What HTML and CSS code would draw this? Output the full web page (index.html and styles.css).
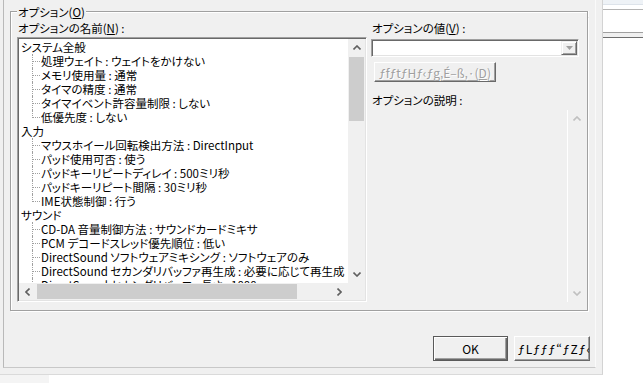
FILE: index.html
```html
<!DOCTYPE html>
<html lang="ja">
<head>
  <meta charset="UTF-8">
  <title>オプション</title>
  <link rel="stylesheet" href="styles.css">
</head>
<body>
<div class="screen">
  <div class="main">
    <div class="dialog">
      <div class="page">
        <div class="group">
          <div class="group-head">
            <span class="head-l"></span>
            <span class="group-title">オプション(<u>O</u>)</span>
            <span class="head-r"></span>
          </div>
          <div class="group-body">
            <div class="col-left">
              <div class="label">オプションの名前(<u>N</u>) :</div>
              <div class="listbox">
                <div class="list-view">
                  <ul class="tree">
                    <li>
                      <div class="root-label">システム全般</div>
                      <ul class="children">
                        <li class="leaf"><span class="branch"></span><span class="leaf-text">処理ウェイト : ウェイトをかけない</span></li>
                        <li class="leaf"><span class="branch"></span><span class="leaf-text">メモリ使用量 : 通常</span></li>
                        <li class="leaf"><span class="branch"></span><span class="leaf-text">タイマの精度 : 通常</span></li>
                        <li class="leaf"><span class="branch"></span><span class="leaf-text">タイマイベント許容量制限 : しない</span></li>
                        <li class="leaf last"><span class="branch"></span><span class="leaf-text">低優先度 : しない</span></li>
                      </ul>
                    </li>
                    <li>
                      <div class="root-label">入力</div>
                      <ul class="children">
                        <li class="leaf"><span class="branch"></span><span class="leaf-text">マウスホイール回転検出方法 : DirectInput</span></li>
                        <li class="leaf"><span class="branch"></span><span class="leaf-text">パッド使用可否 : 使う</span></li>
                        <li class="leaf"><span class="branch"></span><span class="leaf-text">パッドキーリピートディレイ : 500ミリ秒</span></li>
                        <li class="leaf"><span class="branch"></span><span class="leaf-text">パッドキーリピート間隔 : 30ミリ秒</span></li>
                        <li class="leaf last"><span class="branch"></span><span class="leaf-text">IME状態制御 : 行う</span></li>
                      </ul>
                    </li>
                    <li>
                      <div class="root-label">サウンド</div>
                      <ul class="children">
                        <li class="leaf"><span class="branch"></span><span class="leaf-text">CD-DA 音量制御方法 : サウンドカードミキサ</span></li>
                        <li class="leaf"><span class="branch"></span><span class="leaf-text">PCM デコードスレッド優先順位 : 低い</span></li>
                        <li class="leaf"><span class="branch"></span><span class="leaf-text">DirectSound ソフトウェアミキシング : ソフトウェアのみ</span></li>
                        <li class="leaf"><span class="branch"></span><span class="leaf-text">DirectSound セカンダリバッファ再生成 : 必要に応じて再生成</span></li>
                        <li class="leaf"><span class="branch"></span><span class="leaf-text">DirectSound セカンダリバッファ長さ : 1000</span></li>
                      </ul>
                    </li>
                  </ul>
                </div>
                <div class="vscroll">
                  <div class="sb-btn"><svg width="8" height="5" viewBox="0 0 8 5"><path d="M0.5 4.5 L4 1 L7.5 4.5" fill="none" stroke="#606060" stroke-width="1.6"/></svg></div>
                  <div class="vtrack"><div class="vthumb"></div></div>
                  <div class="sb-btn"><svg width="8" height="5" viewBox="0 0 8 5"><path d="M0.5 0.5 L4 4 L7.5 0.5" fill="none" stroke="#606060" stroke-width="1.6"/></svg></div>
                </div>
                <div class="hscroll">
                  <div class="sb-btn"><svg width="5" height="8" viewBox="0 0 5 8"><path d="M4.5 0.5 L1 4 L4.5 7.5" fill="none" stroke="#606060" stroke-width="1.6"/></svg></div>
                  <div class="htrack"><div class="hthumb"></div></div>
                  <div class="sb-btn"><svg width="5" height="8" viewBox="0 0 5 8"><path d="M0.5 0.5 L4 4 L0.5 7.5" fill="none" stroke="#606060" stroke-width="1.6"/></svg></div>
                </div>
                <div class="corner"></div>
              </div>
            </div>

            <div class="col-right">
              <div class="label">オプションの値(<u>V</u>) :</div>
              <div class="combo">
                <div class="combo-btn"><svg width="7" height="4" viewBox="0 0 7 4"><path d="M0 0 H7 L3.5 4 Z" fill="#a0a0a0"/></svg></div>
              </div>
              <button class="btn btn-push btn-disabled" disabled>ƒfƒtƒHƒ‹ƒg‚É–ß‚·(<u>D</u>)</button>
              <div class="label label-desc">オプションの説明 :</div>
              <div class="desc">
                <div class="desc-scroll">
                  <div class="sb-btn"><svg width="8" height="5" viewBox="0 0 8 5"><path d="M0.5 4.5 L4 1 L7.5 4.5" fill="none" stroke="#c0c0c0" stroke-width="1.6"/></svg></div>
                  <div class="sb-btn"><svg width="8" height="5" viewBox="0 0 8 5"><path d="M0.5 0.5 L4 4 L7.5 0.5" fill="none" stroke="#c0c0c0" stroke-width="1.6"/></svg></div>
                </div>
              </div>
            </div>
          </div>
        </div>

        <div class="actions">
          <button class="btn btn-default">OK</button>
          <button class="btn btn-push btn-cancel">ƒLƒƒƒ“ƒZƒ‹</button>
        </div>
      </div>
    </div>
    <div class="taskstrip"><div class="patch"></div></div>
  </div>

  <div class="side">
    <div class="side-band"></div>
    <div class="side-line-a"></div>
    <div class="side-gap-a"></div>
    <div class="side-line-b"></div>
    <div class="side-gap-b"></div>
    <div class="side-line-c"></div>
    <div class="side-bar"></div>
    <div class="side-line-d"></div>
  </div>
</div>
</body>
</html>
```

FILE: styles.css
```css
* {
  box-sizing: border-box;
}
body {
  margin: 0;
  width: 643px;
  height: 383px;
  overflow: hidden;
  background: #fff;
  font-family: "Noto Sans CJK JP", sans-serif;
  font-size: 11.5px;
  font-feature-settings: "palt";
  color: #000;
}
u {
  text-underline-offset: 1px;
}
.screen {
  display: flex;
  height: 383px;
}
.main {
  width: 603px;
  display: flex;
  flex-direction: column;
}

/* dialog frame */
.dialog {
  height: 375px;
  background: #f0f0f0;
  border-right: 1px solid #d3d3d3;
  border-bottom: 1px solid #dadada;
  padding: 0 6px 6px 3px;
}
.page {
  height: 368px;
  border-left: 1px solid #b9b9b9;
  border-right: 1px solid #fafafa;
  border-bottom: 1px solid #c8c8c8;
  display: flex;
  flex-direction: column;
}

/* group box */
.group {
  margin: 5px 7px 0 6px;
  display: flex;
  flex-direction: column;
}
.group-head {
  display: flex;
  height: 12px;
}
.head-l {
  width: 7px;
  height: 6px;
  align-self: flex-end;
  border-top: 1px solid #a0a0a0;
  border-left: 1px solid #a0a0a0;
  box-shadow: inset 1px 1px 0 #fff;
}
.group-title {
  padding: 1px 1px 0;
  line-height: 12px;
  white-space: nowrap;
}
.head-r {
  flex: 1;
  height: 6px;
  align-self: flex-end;
  border-top: 1px solid #a0a0a0;
  border-right: 1px solid #a0a0a0;
  box-shadow: inset 0 1px 0 #fff, 1px 0 0 #fff;
}
.group-body {
  display: flex;
  gap: 4px;
  border: 1px solid #a0a0a0;
  border-top: 0;
  box-shadow: inset 1px 0 0 #fff, 1px 1px 0 #fff;
  padding: 4px 3px 8px 6px;
}
.label {
  height: 14px;
  line-height: 14px;
  padding-left: 1px;
  white-space: nowrap;
}

/* left: tree list */
.col-left {
  width: 350px;
}
.col-left .label {
  margin-bottom: 2px;
}
.listbox {
  width: 350px;
  height: 265px;
  background: #fff;
  border: 1px solid;
  border-color: #a0a0a0 #fff #fff #a0a0a0;
  padding: 1px;
  box-shadow: inset 1px 1px 0 #696969, inset -1px -1px 0 #e3e3e3;
  display: grid;
  grid-template-columns: 1fr 17px;
  grid-template-rows: 1fr 17px;
}
.list-view {
  overflow: hidden;
  padding-top: 1px;
}
.tree {
  list-style: none;
  margin: 0;
  padding: 0 0 0 2px;
}
.tree li {
  line-height: 14px;
  white-space: nowrap;
}
.root-label {
  height: 14px;
}
.children {
  list-style: none;
  margin: 0 0 0 11px;
  padding: 0;
}
.leaf {
  display: flex;
  height: 14px;
  border-left: 1px dotted #a0a0a0;
}
.branch {
  flex: none;
  width: 7px;
  height: 8px;
  border-bottom: 1px dotted #a0a0a0;
}
.leaf.last {
  border-left: 0;
}
.leaf.last .branch {
  width: 8px;
  border-left: 1px dotted #a0a0a0;
}
.leaf-text {
  padding-left: 1px;
}

/* scrollbars */
.vscroll {
  display: flex;
  flex-direction: column;
  background: #f0f0f0;
}
.hscroll {
  display: flex;
  background: #f0f0f0;
}
.corner {
  background: #f0f0f0;
}
.sb-btn {
  flex: none;
  width: 17px;
  height: 17px;
  display: flex;
  align-items: center;
  justify-content: center;
}
.vtrack {
  flex: 1;
  padding: 1px;
}
.vthumb {
  height: 64px;
  background: #cdcdcd;
}
.htrack {
  flex: 1;
  padding: 1px;
}
.hthumb {
  width: 260px;
  height: 100%;
  background: #cdcdcd;
}

/* right: value + description */
.col-right {
  width: 213px;
  display: flex;
  flex-direction: column;
}
.combo {
  margin-top: 4px;
  width: 208px;
  height: 18px;
  background: #fff;
  border: 1px solid;
  border-color: #a0a0a0 #fff #fff #a0a0a0;
  padding: 1px;
  box-shadow: inset 1px 1px 0 #696969, inset -1px -1px 0 #e3e3e3;
  display: flex;
  justify-content: flex-end;
}
.combo-btn {
  width: 16px;
  background: #f0f0f0;
  border: 1px solid;
  border-color: #f0f0f0 #696969 #696969 #f0f0f0;
  box-shadow: inset 1px 1px 0 #fff, inset -1px -1px 0 #a0a0a0;
  display: flex;
  align-items: center;
  justify-content: center;
}
.btn {
  font: inherit;
  font-feature-settings: "palt";
  background: #f0f0f0;
  color: #000;
  padding: 0;
  display: flex;
  align-items: center;
  justify-content: center;
  white-space: nowrap;
  overflow: hidden;
}
.btn-push {
  border: 1px solid;
  border-color: #fff #696969 #696969 #fff;
  box-shadow: inset -1px -1px 0 #a0a0a0;
}
.btn-disabled {
  margin: 5px 0 0 3px;
  width: 122px;
  height: 20px;
  font-size: 12px;
  color: #a0a0a0;
  text-shadow: 1px 1px 0 #fff;
}
.label-desc {
  margin-top: 11px;
}
.desc {
  margin-top: 3px;
  height: 192px;
  display: flex;
  justify-content: flex-end;
}
.desc-scroll {
  width: 17px;
  border-left: 1px solid #fff;
  display: flex;
  flex-direction: column;
  justify-content: space-between;
}

/* bottom buttons */
.actions {
  display: flex;
  justify-content: flex-end;
  gap: 6px;
  margin-top: 25px;
  padding-right: 5px;
}
.actions .btn {
  height: 25px;
  font-size: 12px;
}
.btn-default {
  width: 75px;
  border: 1px solid #5a5a5a;
  box-shadow: inset 1px 1px 0 #fff, inset -1px -1px 0 #696969, inset -2px -2px 0 #a0a0a0;
}
.btn-cancel {
  width: 76px;
  justify-content: flex-start;
  padding-left: 3px;
  letter-spacing: 1px;
}

/* window edges around the dialog */
.taskstrip {
  flex: 1;
  background: #fff;
}
.patch {
  width: 49px;
  height: 100%;
  background: #f4f4f4;
}
.side {
  flex: 1;
  background: #fff;
  display: flex;
  flex-direction: column;
}
.side-band {
  height: 4px;
  background: #eef2f6;
}
.side-line-a {
  height: 1px;
  background: #dde3ea;
}
.side-gap-a {
  height: 4px;
}
.side-line-b {
  height: 1px;
  background: #b4b4b4;
}
.side-gap-b {
  height: 22px;
}
.side-line-c {
  height: 1px;
  background: #a0a0a0;
}
.side-bar {
  height: 4px;
  background: #f0f0f0;
}
.side-line-d {
  height: 1px;
  background: #6e6e6e;
}
```
